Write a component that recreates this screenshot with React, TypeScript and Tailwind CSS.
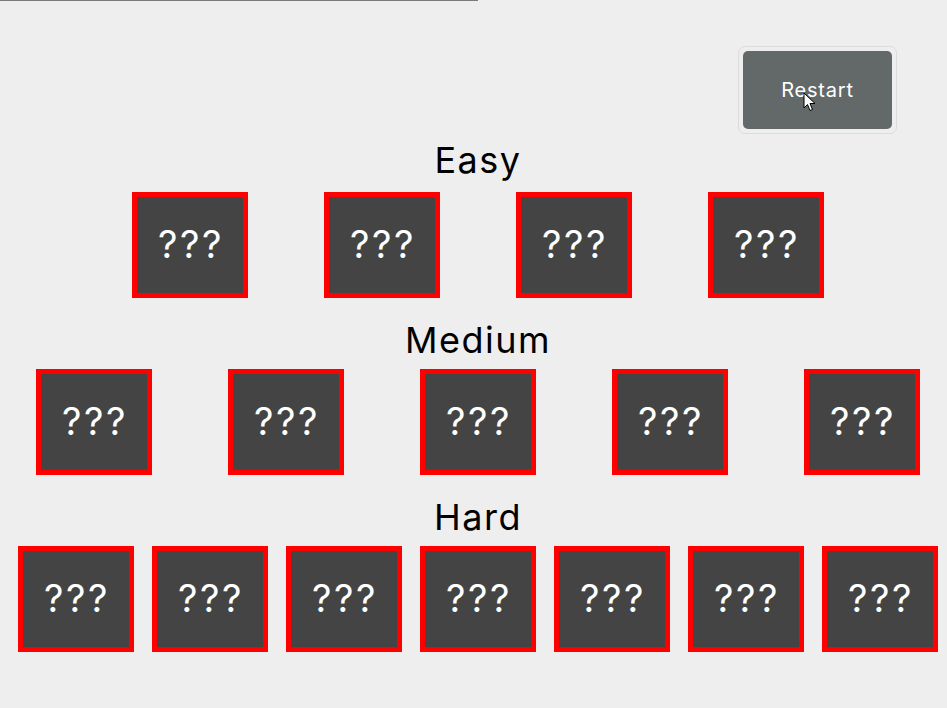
import React from 'react';

const font = { fontFamily: 'Inter, "Liberation Sans", sans-serif' };

const Card: React.FC = () => (
  <div className="w-[116px] h-[106px] shrink-0 border-[5px] border-[#ff0000] bg-[#444444] flex items-center justify-center pb-[3px]">
    <span className="text-[38px] leading-none text-white tracking-[2.5px] pl-[2px]">???</span>
  </div>
);

interface RowProps {
  title: string;
  count: number;
  gap: string;
  titleMt: string;
  cardsMt: string;
}

const Row: React.FC<RowProps> = ({ title, count, gap, titleMt, cardsMt }) => (
  <section className="flex flex-col items-center">
    <h2 className={`text-[36px] leading-[36px] text-black font-normal tracking-[1.5px] ${titleMt}`}>{title}</h2>
    <div className={`flex ${gap} ${cardsMt}`}>
      {Array.from({ length: count }).map((_, i) => (
        <Card key={i} />
      ))}
    </div>
  </section>
);

const Cursor: React.FC = () => (
  <svg className="absolute left-[803px] top-[92px] pointer-events-none" width="13" height="20" viewBox="0 0 13 20">
    <path d="M1 1 L1 16 L4.5 12.5 L7 18.5 L9.5 17.5 L7 11.5 L12 11.5 Z" fill="#fff" stroke="#000" strokeWidth="1" strokeLinejoin="round" />
  </svg>
);

export default function App() {
  return (
    <div className="min-h-screen w-full overflow-hidden bg-[#eeeeee]" style={font}>
      <div className="relative w-[956px]">
        <div className="h-px w-[478px] bg-[#7a7a7a]" />
        <div className="flex justify-end pr-[59px] mt-[45px]">
          <div className="rounded-[7px] border border-[#dcdcdc] p-1">
            <button className="w-[149px] h-[78px] rounded-[5px] bg-[#636869] text-white text-[20px] tracking-[0.8px]">
              Restart
            </button>
          </div>
        </div>
        <Row title="Easy" count={4} gap="gap-[76px]" titleMt="mt-[8px]" cardsMt="mt-[14px]" />
        <Row title="Medium" count={5} gap="gap-[76px]" titleMt="mt-[24px]" cardsMt="mt-[11px]" />
        <Row title="Hard" count={7} gap="gap-[18px]" titleMt="mt-[24px]" cardsMt="mt-[11px]" />
        <Cursor />
      </div>
    </div>
  );
}
